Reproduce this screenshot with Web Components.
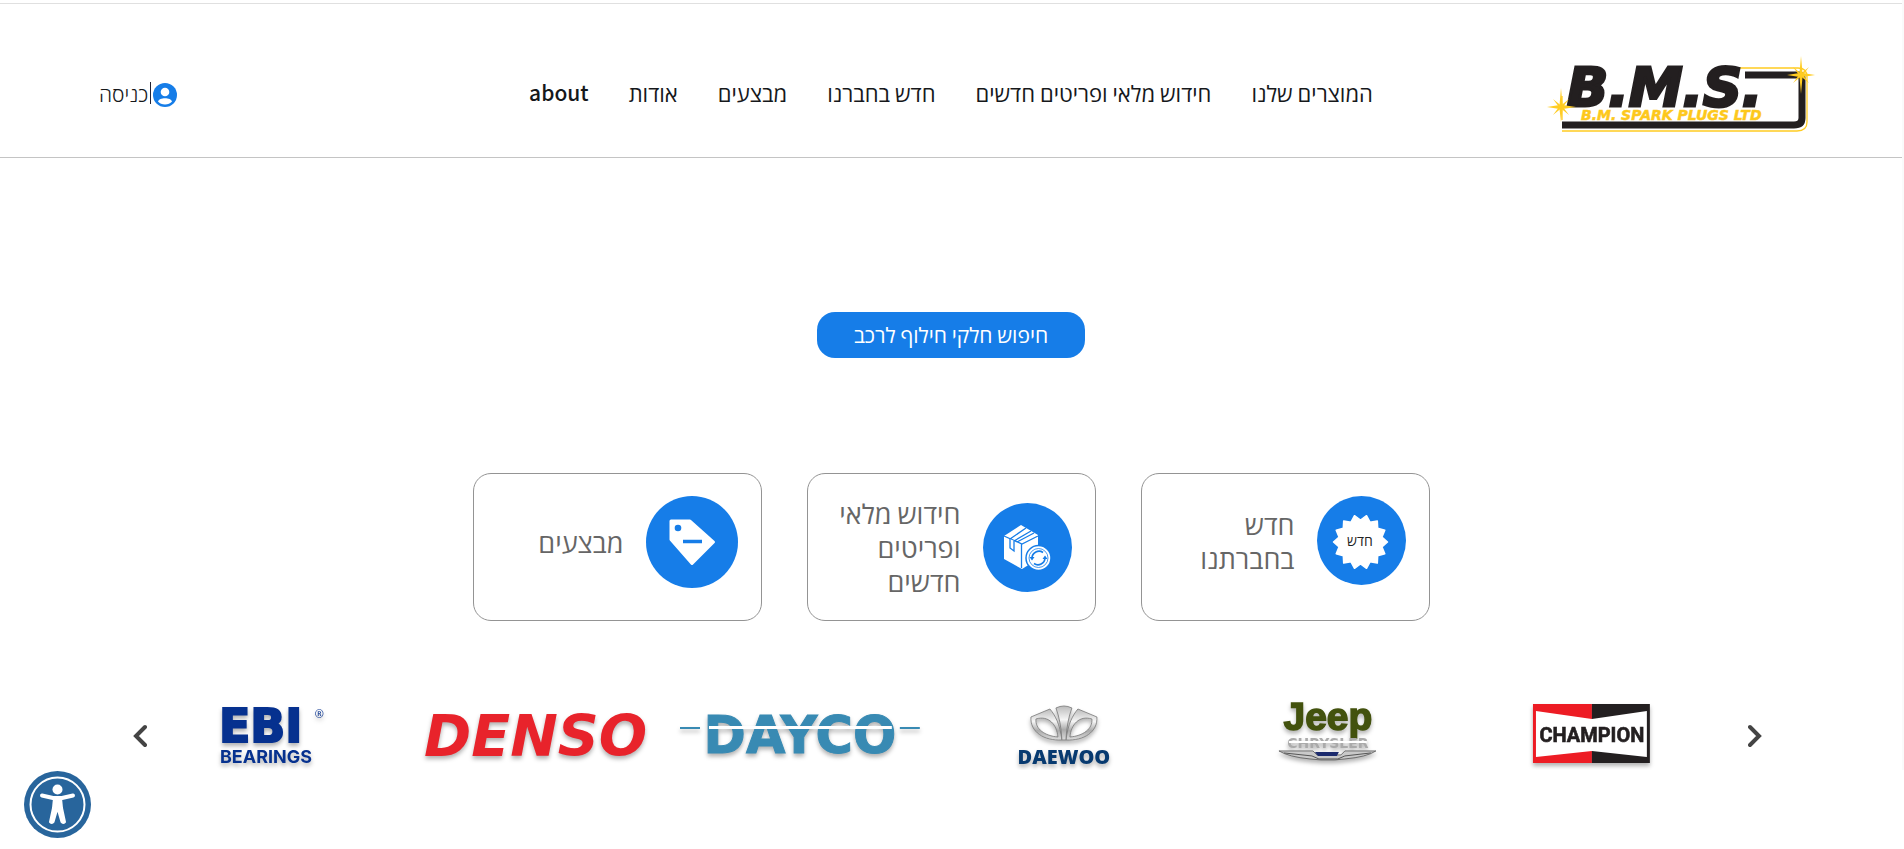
<!DOCTYPE html>
<html lang="he" dir="rtl">
<head>
<meta charset="utf-8">
<meta name="viewport" content="width=device-width, initial-scale=1">
<title>B.M.S. Spark Plugs</title>
<style>
  * { box-sizing: border-box; }
  body {
    margin: 0;
    padding-top: 3px;
    border-right: 2px solid #fafafa;
    background: #fff;
    color: #16181b;
    font-family: "Noto Sans CJK SC", "Open Sans", sans-serif;
    font-size: 20px;
    --blue: #167de8;
  }
</style>
</head>
<body>

<site-header>
  <bms-logo slot="logo"></bms-logo>
  <nav-link href="#products">המוצרים שלנו</nav-link>
  <nav-link href="#stock">חידוש מלאי ופריטים חדשים</nav-link>
  <nav-link href="#new">חדש בחברנו</nav-link>
  <nav-link href="#sales">מבצעים</nav-link>
  <nav-link href="#info">אודות</nav-link>
  <nav-link href="#about" lang="en">about</nav-link>
  <account-link slot="account">כניסה</account-link>
</site-header>

<main>
  <search-button>חיפוש חלקי חילוף לרכב</search-button>

  <card-row>
    <promo-card href="#new">
      <svg slot="icon" width="89" height="89" viewBox="0 0 89 89" aria-hidden="true">
        <circle cx="44.500" cy="44.500" r="44.500" fill="#167de8"/>
        <path id="burst" fill="#fff" stroke="#fff" stroke-width="1.500" stroke-linejoin="round"/>
        <text x="43" y="50" text-anchor="middle" font-family="Open Sans" font-size="14" fill="#222">חדש</text>
      </svg>
      חדש בחברתנו
    </promo-card>
    <promo-card href="#stock">
      <svg slot="icon" width="89" height="89" viewBox="0 0 89 89" aria-hidden="true">
        <circle cx="44.500" cy="44.500" r="44.500" fill="#167de8"/>
        <path fill="#fff" d="M21 33 38 22 55 32 55 56 39 66 21 56Z"/>
        <path fill="none" stroke="#167de8" stroke-width="1.300" d="M21 33 39 41 55 33M38.500 41V65M27 36 43 25M31 38 48 28M34 39 51 30"/>
        <path fill="#fff" stroke="#167de8" stroke-width="1.300" d="M27 36V45L31 48V38"/>
        <circle cx="55.500" cy="55" r="12.500" fill="#fff" stroke="#167de8" stroke-width="1.500"/>
        <circle cx="55.500" cy="55" r="9.500" fill="none" stroke="#167de8" stroke-width=".8"/>
        <path fill="none" stroke="#167de8" stroke-width="1.700" d="M49 55A7 7 0 0 1 60 49.500M62 55A7 7 0 0 1 51 60.500"/>
        <path fill="#167de8" d="M46.500 54H51.500L49 57.500ZM59.500 56H64.500L62 52.500Z"/>
      </svg>
      חידוש מלאי ופריטים חדשים
    </promo-card>
    <promo-card href="#sales">
      <svg slot="icon" width="92" height="92" viewBox="0 0 92 92" aria-hidden="true">
        <circle cx="46" cy="46" r="46" fill="#167de8"/>
        <path fill="#fff" stroke="#fff" stroke-width="3" stroke-linejoin="round" d="M25 25H44L67.500 46 46 67.500 25 43.500Z"/>
        <circle cx="32" cy="32" r="3.300" fill="#167de8"/>
        <path stroke="#167de8" stroke-width="3.500" d="M37 45.500H56"/>
      </svg>
      מבצעים
    </promo-card>
  </card-row>

  <brand-slider>
    <svg viewBox="0 0 240 80" role="img" aria-label="EBI Bearings">
      <g fill="#06318f" font-weight="700">
        <text x="67" y="52" font-family="DejaVu Sans" font-size="46" stroke="#06318f" stroke-width="2">EBI</text>
        <text x="68" y="73" font-family="Inter" font-size="18">BEARINGS</text>
        <text x="163" y="28" font-family="Open Sans" font-size="11" font-weight="400">®</text>
      </g>
    </svg>
    <svg viewBox="0 0 240 80" role="img" aria-label="Denso">
      <text x="8" y="66" font-family="DejaVu Sans" font-size="57" font-weight="700" font-style="italic" fill="#e8232b">DENSO</text>
    </svg>
    <svg viewBox="0 0 240 80" role="img" aria-label="Dayco">
      <text x="120" y="63" text-anchor="middle" font-family="DejaVu Sans" font-size="51" font-weight="700" fill="#388ab3" stroke="#388ab3">DAYCO</text>
      <path stroke="#fff" stroke-width="3" d="M29 37.500H212"/>
      <path stroke="#388ab3" stroke-width="2" d="M0 38H20M220 38H240"/>
    </svg>
    <svg viewBox="0 0 240 80" role="img" aria-label="Daewoo">
      <defs>
        <linearGradient id="chrome" x2="0" y2="1">
          <stop stop-color="#bbb"/><stop offset=".4" stop-color="#f5f5f5"/>
          <stop offset=".7" stop-color="#aaa"/><stop offset="1" stop-color="#ddd"/>
        </linearGradient>
      </defs>
      <g fill="url(#chrome)" stroke="#777" stroke-width=".8" fill-rule="evenodd">
        <path d="M88 27 107 19C112 25 117 34 119 50C101 51 87 42 88 27ZM93 29C92 39 102 46 115 47C114 35 106 25 93 29Z"/>
        <path d="M154 27 135 19C130 25 125 34 123 50C141 51 155 42 154 27ZM149 29C150 39 140 46 127 47C128 35 136 25 149 29Z"/>
        <path d="M113 18Q121 14 129 18Q124 31 123 50H119Q118 31 113 18Z"/>
      </g>
      <text x="121" y="74" text-anchor="middle" font-family="Open Sans" font-size="20" font-weight="800" fill="#073a70">DAEWOO</text>
    </svg>
    <svg viewBox="0 0 240 80" role="img" aria-label="Jeep Chrysler">
      <text x="121" y="40" text-anchor="middle" font-family="Liberation Sans" font-size="39" font-weight="700" fill="#43520e" stroke="#43520e" stroke-width="1.500">Jeep</text>
      <text x="121" y="58" text-anchor="middle" font-family="DejaVu Sans" font-size="14" font-weight="700" fill="#aaa">CHRYSLER</text>
      <path stroke="#fff" stroke-width="2" d="M82 52H160"/>
      <path fill="#c9c9c9" stroke="#555" stroke-width=".8" d="M72 61H106L110 65H134L138 61H169Q160 67 138 69L128 70H114L103 69Q82 67 72 61Z"/>
      <path fill="none" stroke="#555" d="M77 63 105 66 112 69H131L138 66 164 63"/>
      <path fill="#1b2a6d" d="M108 62H132L130 66H111Z"/>
    </svg>
    <svg viewBox="0 0 240 80" role="img" aria-label="Champion">
      <path fill="#ed1c24" d="M62 14H121V73H62Z"/>
      <path fill="#231f20" d="M121 14H179V73H121Z"/>
      <path fill="#fff" d="M65 21 121 29 176 21V67L121 61 65 67Z"/>
      <text x="121" y="52" text-anchor="middle" font-family="Roboto" font-size="20" font-weight="700" fill="#231f20" stroke="#231f20" stroke-width=".6">CHAMPION</text>
    </svg>
  </brand-slider>
</main>

<access-button></access-button>

<script>
const define = (name, html, setup) => {
  const template = document.createElement("template");
  template.innerHTML = html;
  customElements.define(name, class extends HTMLElement {
    constructor() {
      super();
      const shadow = this.attachShadow({ mode: "open" });
      shadow.append(template.content.cloneNode(true));
    }
    connectedCallback() {
      if (setup) setup(this, this.shadowRoot);
    }
  });
};

const copyHref = (host, shadow) => {
  shadow.querySelector("a").href = host.getAttribute("href") || "#";
};

define("site-header", `
  <style>
    :host {
      display: grid;
      grid-template-columns: 1fr auto 1fr;
      align-items: center;
      padding: 52px 87px 23px;
      border-top: 1px solid #e0e0e0;
      border-bottom: 1px solid #c4c4c4;
    }
    nav { display: flex; gap: 40px; padding-bottom: 6px; }
    .account { justify-self: end; padding: 0 0 4px 12px; }
  </style>
  <slot name="logo"></slot>
  <nav><slot></slot></nav>
  <div class="account"><slot name="account"></slot></div>
`);

define("nav-link", `
  <style>
    :host { display: block; }
    a {
      color: inherit;
      font-size: 22px;
      font-weight: 500;
      line-height: 32px;
      text-decoration: none;
      white-space: nowrap;
    }
    :host([lang="en"]) a { font-size: 21px; }
  </style>
  <a><slot></slot></a>
`, copyHref);

define("account-link", `
  <style>
    :host { display: block; }
    a {
      display: flex;
      align-items: center;
      gap: 2px;
      color: inherit;
      font-size: 21px;
      font-weight: 300;
      line-height: 32px;
      text-decoration: none;
    }
    svg { margin-top: 4px; }
    i { width: 1px; height: 22px; background: #223; }
  </style>
  <a href="#login">
    <svg width="24" height="24" viewBox="0 0 24 24" aria-hidden="true">
      <circle cx="12" cy="12" r="12" fill="#167de8"/>
      <circle cx="12" cy="9" r="4.300" fill="#fff"/>
      <path fill="#fff" d="M5 18.500C6 14 18 14 19 18.500C16 22.500 8 22.500 5 18.500Z"/>
    </svg>
    <i></i>
    <span><slot></slot></span>
  </a>
`);

define("bms-logo", `
  <style>
    :host { display: block; direction: ltr; justify-self: start; }
    svg { display: block; }
    text { font-family: "DejaVu Sans"; font-weight: 700; font-style: italic; }
  </style>
  <svg width="268" height="78" viewBox="0 0 268 78" role="img" aria-label="B.M.S. B.M. Spark Plugs LTD">
    <path fill="none" stroke="#231f20" stroke-width="7" d="M198 19H252Q255 19 255 22V62Q255 69 247 69H15"/>
    <path fill="none" stroke="#fc2" stroke-width="1.300" d="M174 12H251Q260 12 260 21V66Q260 75 250 75H15M15 64V40"/>
    <text x="20" y="50" font-size="54" fill="#231f20" stroke="#231f20" stroke-width="3">B.M.S.</text>
    <text x="34" y="64" font-size="14" fill="#fdc81c" stroke="#fdc81c" stroke-width=".5">B.M. SPARK PLUGS LTD</text>
    <g fill="#fc2">
      <path d="M14 32 15.500 49 29 51 15.500 53 14 66 12.500 53 0 51 12.500 49Z"/>
      <path d="M6 43 14 49.500 22 43 16 51 22 59 14 52.500 6 59 12 51Z"/>
      <path d="M254 0 255.500 17 268 19 255.500 21 254 38 252.500 21 240 19 252.500 17Z"/>
      <path d="M246 11 254 17.500 262 11 256 19 262 27 254 20.500 246 27 252 19Z"/>
    </g>
  </svg>
`);

define("search-button", `
  <style>
    :host { display: flex; justify-content: center; padding-top: 154px; }
    button {
      padding: 6px 37px 8px;
      border: 0;
      border-radius: 18px;
      background: var(--blue);
      color: #fff;
      font: inherit;
      font-size: 21px;
      line-height: 32px;
      cursor: pointer;
    }
  </style>
  <button type="button"><slot></slot></button>
`);

define("card-row", `
  <style>
    :host {
      display: flex;
      justify-content: center;
      gap: 45px;
      padding-top: 115px;
    }
  </style>
  <slot></slot>
`);

define("promo-card", `
  <style>
    :host { display: flex; flex: 0 0 289px; }
    a {
      display: flex;
      flex: 1;
      align-items: flex-start;
      box-sizing: border-box;
      padding: 22px 23px;
      border: 1px solid #949494;
      border-radius: 18px;
      color: #666;
      text-decoration: none;
    }
    .row { display: flex; align-items: center; gap: 22px; }
    p { margin: 0; max-width: 130px; font-size: 27px; line-height: 34px; }
    ::slotted(svg) { display: block; flex: none; }
  </style>
  <a>
    <div class="row">
      <slot name="icon"></slot>
      <p><slot></slot></p>
    </div>
  </a>
`, copyHref);

define("brand-slider", `
  <style>
    :host {
      display: flex;
      direction: ltr;
      align-items: center;
      padding: 69px 135px 0 128px;
    }
    .slides {
      display: grid;
      flex: 1;
      grid-template-columns: repeat(6, 1fr);
      gap: 24px;
      margin-right: 32px;
    }
    button {
      display: flex;
      justify-content: center;
      width: 24px;
      padding: 20px 0 8px;
      border: 0;
      background: none;
      cursor: pointer;
    }
    path { fill: none; stroke: #444; stroke-width: 4; stroke-linecap: round; }
    ::slotted(svg) {
      display: block;
      width: 100%;
      overflow: visible;
      filter: drop-shadow(0 3px 2px rgba(0, 0, 0, .3));
    }
  </style>
  <button type="button" aria-label="הקודם">
    <svg width="14" height="24" viewBox="0 0 14 24"><path d="M12 3 3 12 12 21"/></svg>
  </button>
  <div class="slides"><slot></slot></div>
  <button type="button" aria-label="הבא">
    <svg width="14" height="24" viewBox="0 0 14 24"><path d="M2 3 11 12 2 21"/></svg>
  </button>
`);

define("access-button", `
  <style>
    :host { position: fixed; left: 24px; bottom: 11px; }
    button { display: block; padding: 0; border: 0; background: none; cursor: pointer; }
    svg { display: block; }
  </style>
  <button type="button" aria-label="נגישות">
    <svg width="67" height="67" viewBox="0 0 67 67">
      <circle cx="33.500" cy="33.500" r="33.500" fill="#28659c"/>
      <circle cx="33.500" cy="33.500" r="27" fill="none" stroke="#fff" stroke-width="2"/>
      <circle cx="33.500" cy="18.500" r="5" fill="#fff"/>
      <path fill="none" stroke="#fff" stroke-width="4" stroke-linecap="round" stroke-linejoin="round" d="M18 24.500 29 27H38L49 24.500"/>
      <path fill="#fff" stroke="#fff" stroke-width="2" stroke-linejoin="round" d="M30 27H37L38 37 41 51Q39 53 37.500 51L34 39H33L29.500 51Q28 53 26 51L29 37Z"/>
    </svg>
  </button>
`);

// fourteen-point badge behind the "new" label
const points = [];
for (let i = 0; i < 28; i++) {
  const r = i % 2 ? 22 : 27;
  const a = i * Math.PI / 14;
  points.push((43.5 + r * Math.cos(a)).toFixed(1) + " " + (46 + r * Math.sin(a)).toFixed(1));
}
document.querySelector("#burst").setAttribute("d", "M" + points.join("L") + "Z");
</script>
</body>
</html>
